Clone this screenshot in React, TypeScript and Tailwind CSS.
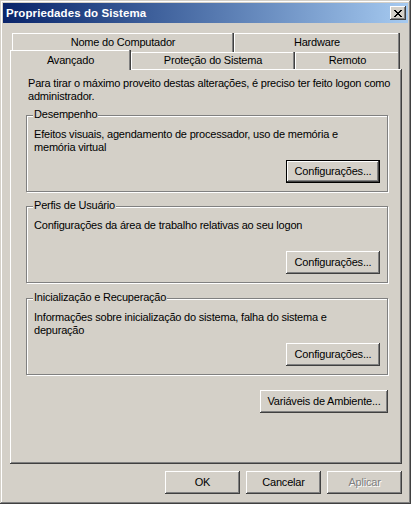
const bevel =
  "shadow-[inset_-1px_-1px_#404040,inset_1px_1px_#ffffff,inset_-2px_-2px_#808080,inset_2px_2px_#d4d0c8]";

const CloseGlyph = () => {
  const rows = ["11000011", "01100110", "00111100", "00011000", "00111100", "01100110", "11000011"];
  return (
    <svg width="8" height="7" viewBox="0 0 8 7" shapeRendering="crispEdges">
      {rows.map((r, y) =>
        r.split("").map((c, x) => (c === "1" ? <rect key={`${x}-${y}`} x={x} y={y} width="1" height="1" fill="#000" /> : null))
      )}
    </svg>
  );
};

const Button = ({ label, width, isDefault = false, disabled = false }: { label: string; width: string; isDefault?: boolean; disabled?: boolean }) => (
  <div
    className={`${width} h-[23px] flex items-center justify-center bg-[#d4d0c8] ${
      isDefault
        ? "border border-black shadow-[inset_-1px_-1px_#404040,inset_1px_1px_#ffffff,inset_-2px_-2px_#808080]"
        : bevel
    } ${disabled ? "text-[#808080] [text-shadow:1px_1px_0_#ffffff]" : "text-black"}`}
  >
    {label}
  </div>
);

const Tab = ({ label, width, tall = "h-full" }: { label: string; width: string; tall?: string }) => (
  <div
    className={`${width} ${tall} flex items-center justify-center bg-[#d4d0c8] shadow-[inset_-1px_0_#404040,inset_-2px_0_#808080,inset_1px_1px_#ffffff]`}
  >
    {label}
  </div>
);

const Group = ({ title, lines, gap }: { title: string; lines: string[]; gap: string }) => (
  <div className={`relative ${gap} border border-[#808080] shadow-[inset_1px_1px_#ffffff,1px_1px_#ffffff] pt-[12px] pb-[8px]`}>
    <span className="absolute -top-[8px] left-[6px] px-[1px] leading-[13px] bg-[#d4d0c8]">{title}</span>
    <div className="h-[26px] pl-[7px] whitespace-nowrap">
      {lines.map((l) => (
        <div key={l}>{l}</div>
      ))}
    </div>
    <div className="mt-[6px] flex justify-end pr-[7px]">
      <Button label="Configurações..." width="w-[94px]" isDefault={title === "Desempenho"} />
    </div>
  </div>
);

export default function App() {
  return (
    <div className="w-[413px] h-[505px] bg-white font-['Liberation_Sans',Arial,sans-serif] text-[11px] leading-[13px] tracking-[-0.2px] text-black">
      <div className="w-[411px] h-[504px] p-[3px] flex flex-col bg-[#d4d0c8] shadow-[inset_-1px_-1px_#404040,inset_1px_1px_#d4d0c8,inset_-2px_-2px_#808080,inset_2px_2px_#ffffff]">
        <div className="h-[20px] flex items-center justify-between pl-[3px] pr-[2px] bg-linear-to-r from-[#0a246a] to-[#a6caf0]">
          <span className="text-white font-bold text-[11.5px] tracking-[0.1px]">Propriedades do Sistema</span>
          <div className={`w-[16px] h-[14px] flex items-center justify-center bg-[#d4d0c8] ${bevel}`}>
            <CloseGlyph />
          </div>
        </div>

        <div className="flex-1 flex flex-col pl-[7px] pr-[6px] pt-[10px]">
          <div className="flex h-[19px] ml-[2px]">
            <Tab label="Nome do Computador" width="w-[222px]" />
            <Tab label="Hardware" width="w-[166px]" />
          </div>
          <div className="flex h-[17px]">
            <div className="relative z-10 -mt-[2px]">
              <Tab label="Avançado" width="w-[121px]" tall="h-[20px]" />
            </div>
            <Tab label="Proteção do Sistema" width="w-[164px]" />
            <Tab label="Remoto" width="w-[105px]" />
          </div>

          <div className="flex-1 flex flex-col pt-[8px] pl-[16px] pr-[14px] shadow-[inset_-1px_-1px_#404040,inset_1px_1px_#ffffff,inset_-2px_-2px_#808080]">
            <div className="ml-[2px] whitespace-nowrap">
              <div>Para tirar o máximo proveito destas alterações, é preciso ter feito logon como</div>
              <div>administrador.</div>
            </div>
            <Group
              title="Desempenho"
              gap="mt-[12px]"
              lines={["Efeitos visuais, agendamento de processador, uso de memória e", "memória virtual"]}
            />
            <Group title="Perfis de Usuário" gap="mt-[14px]" lines={["Configurações da área de trabalho relativas ao seu logon"]} />
            <Group
              title="Inicialização e Recuperação"
              gap="mt-[15px]"
              lines={["Informações sobre inicialização do sistema, falha do sistema e", "depuração"]}
            />
            <div className="mt-[15px] flex justify-end">
              <Button label="Variáveis de Ambiente..." width="w-[128px]" />
            </div>
          </div>

          <div className="flex justify-end gap-[6px] pt-[7px] pb-[7px]">
            <Button label="OK" width="w-[75px]" />
            <Button label="Cancelar" width="w-[75px]" />
            <Button label="Aplicar" width="w-[75px]" disabled />
          </div>
        </div>
      </div>
    </div>
  );
}
